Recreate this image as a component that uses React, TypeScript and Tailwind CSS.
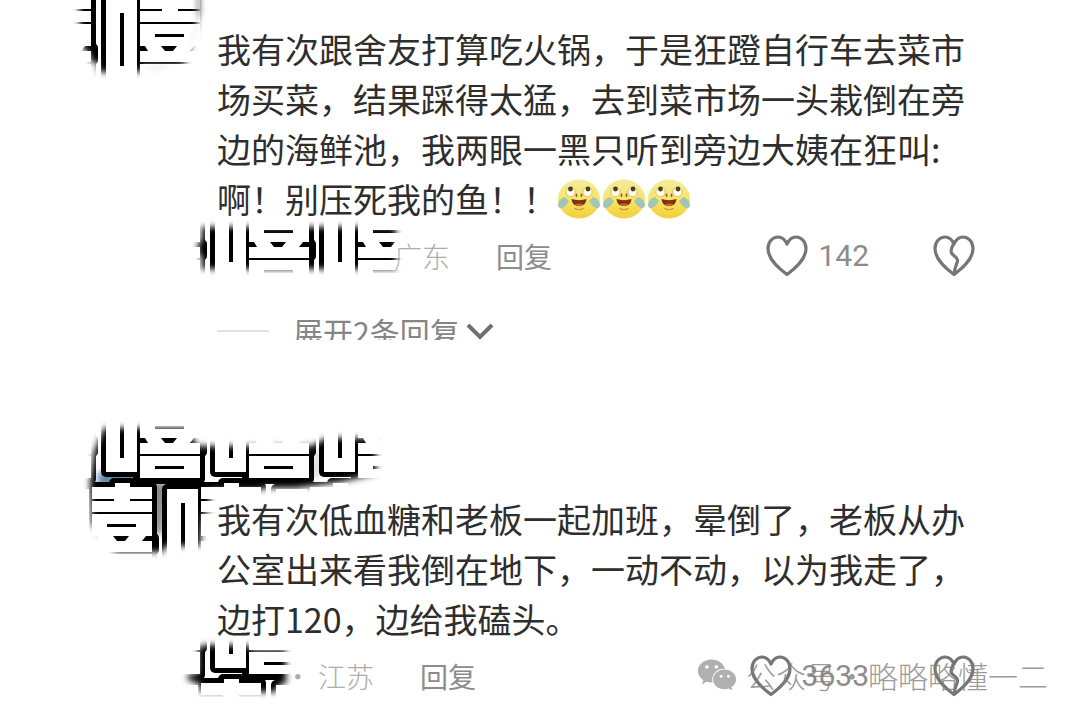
import React from "react";
import { FaWeixin } from "react-icons/fa";

type PatchProps = {
  id: string;
  viewBox: string;
  className: string;
  shape: string;
  tiles: [number, number][];
  children?: React.ReactNode;
};

/* One block of the mosaic sticker: white plates with a heavy rim and thin inner bars */
function Tile({ x, y }: { x: number; y: number }) {
  return (
    <g transform={`translate(${x} ${y})`}>
      <g fill="#000">
        <rect x="-5" y="-3" width="42" height="91" rx="5" />
        <rect x="27" y="-5" width="72" height="100" rx="5" />
        <rect x="51" y="-9" width="27" height="20" rx="5" />
        <rect x="90" y="46" width="11" height="22" rx="5" />
      </g>
      <g fill="#fff">
        <rect x="0" y="2" width="31" height="81" />
        <rect x="34" y="0" width="60" height="89" />
        <rect x="57" y="-4" width="15" height="8" />
      </g>
      <g fill="#000">
        <rect x="14" y="16" width="4" height="53" />
        <rect x="32" y="12" width="24" height="2" />
        <rect x="72" y="12" width="24" height="2" />
        <rect x="32" y="25" width="64" height="2" />
        <rect x="49" y="37" width="29" height="3" />
        <path d="M32 49H39L42 54H32ZM55 49H71L67 54H59ZM96 49H88L84 54H96Z" />
        <rect x="32" y="65" width="64" height="2" />
        <rect x="49" y="77" width="29" height="3" />
      </g>
    </g>
  );
}

/* A soft-edged brush stroke of mosaic blocks */
function Patch({ id, viewBox, className, shape, tiles, children }: PatchProps) {
  return (
    <svg viewBox={viewBox} className={className} aria-hidden="true">
      <defs>
        <filter id={`${id}-soft`} x="-20%" y="-30%" width="140%" height="160%">
          <feGaussianBlur stdDeviation="3" />
        </filter>
        <mask id={`${id}-mask`} maskUnits="userSpaceOnUse" x="0" y="-50" width="1080" height="800">
          <path d={shape} fill="white" filter={`url(#${id}-soft)`} />
        </mask>
      </defs>
      {children}
      <g mask={`url(#${id}-mask)`}>
        {tiles.map(([x, y]) => (
          <Tile key={`${x}-${y}`} x={x} y={y} />
        ))}
      </g>
    </svg>
  );
}

const HEART =
  "M21 39.500C15 35 2 25.500 2 13.500C2 7 6.500 2 12 2C16 2 19 4.500 21 9C23 4.500 26 2 30 2C35.500 2 40 7 40 13.500C40 25.500 27 35 21 39.500Z";

function Heart({ broken = false }: { broken?: boolean }) {
  return (
    <svg viewBox="0 0 42 42" className="h-[42px] w-[42px]" fill="none" stroke="#767676" strokeWidth="3.2" strokeLinejoin="round" strokeLinecap="round" aria-hidden="true">
      <path d={HEART} />
      {broken && <path d="M21 8C19 12 17 15 18.500 18C20 21 25 22 24.500 26C24 30 21 33 21.500 38" />}
    </svg>
  );
}

function Laugh() {
  return (
    <svg viewBox="0 0 44 40" className="h-10 w-11" role="img" aria-label="笑哭">
      <defs>
        <linearGradient id="face" x1="0" y1="0" x2="0" y2="1">
          <stop offset="0" stopColor="#f3ecA0" />
          <stop offset="0.5" stopColor="#f8e468" />
          <stop offset="1" stopColor="#f2cf3a" />
        </linearGradient>
      </defs>
      <ellipse cx="22" cy="20" rx="21" ry="19.500" fill="url(#face)" />
      <path d="M8 18C4 19 1 22 1 27C3 31 7 30 12 22Z" fill="#a3c6b4" />
      <path d="M36 18C40 19 43 22 43 27C41 31 37 30 32 22Z" fill="#a3c6b4" />
      <ellipse cx="13.500" cy="13" rx="4.600" ry="4.800" fill="#fffbe4" stroke="#cdb560" strokeWidth="0.800" />
      <ellipse cx="30.500" cy="13" rx="4.600" ry="4.800" fill="#fffbe4" stroke="#cdb560" strokeWidth="0.800" />
      <circle cx="13.500" cy="10" r="2.400" fill="#4b3f1b" />
      <circle cx="31" cy="10" r="2.400" fill="#4b3f1b" />
      <path d="M19.500 15.500V17M24.500 15.500V17" stroke="#93602a" strokeWidth="1.800" strokeLinecap="round" />
      <path d="M14.500 20C19 21.500 25 21.500 29.500 20C29 25 26 27 22 27C18 27 15 25 14.500 20Z" fill="#7c3414" />
      <path d="M18 25.500C20 24 24 24 26 25.500C24 27.300 20 27.300 18 25.500Z" fill="#d9603a" />
      <path d="M18 29.500C20 31 24 31 26 29.500" fill="none" stroke="#c99a2c" strokeWidth="1.400" strokeLinecap="round" />
    </svg>
  );
}

function Actions({ place, count, placeClass }: { place: string; count: string; placeClass: string }) {
  return (
    <div className="mt-[11px] flex h-[42px] items-center text-[28px] leading-[42px] text-[#8c8c8c]">
      <span className={`mr-[46px] text-right font-light text-[#adadad] ${placeClass}`}>{place}</span>
      <button type="button">回复</button>
      <button type="button" className="ml-auto flex items-center gap-[10px]" aria-label={`赞 ${count}`}>
        <Heart />
        <span className="text-[30px]" style={{ fontFamily: "Roboto, sans-serif" }}>
          {count}
        </span>
      </button>
      <button type="button" className="ml-16" aria-label="踩">
        <Heart broken />
      </button>
    </div>
  );
}

export default function App() {
  return (
    <main
      className="relative min-h-screen overflow-hidden bg-white text-[#2e2e2e]"
      style={{ fontFamily: '"Noto Sans CJK SC", sans-serif' }}
    >
      <article className="relative h-[340px] overflow-hidden pt-6 pr-[105px] pl-[217px]">
        <p className="text-[34px] leading-[50px]">
          我有次跟舍友打算吃火锅，于是狂蹬自行车去菜市场买菜，结果踩得太猛，去到菜市场一头栽倒在旁边的海鲜池，我两眼一黑只听到旁边大姨在狂叫:
          <br />
          啊！别压死我的鱼！！
          <span className="inline-flex h-[50px] items-center gap-px align-top">
            <Laugh />
            <Laugh />
            <Laugh />
          </span>
        </p>
        <Actions place="广东" count="142" placeClass="w-[233px]" />
        <button type="button" className="mt-8 flex items-center text-[30px] leading-[44px] text-[#858585]">
          <span className="mr-6 h-0.5 w-[52px] bg-[#e2e2e2]" />
          展开2条回复
          <svg viewBox="0 0 28 18" className="ml-1.5 h-[18px] w-7" fill="none" stroke="#707070" strokeWidth="4" aria-hidden="true">
            <path d="M2 3L14 15L26 3" />
          </svg>
        </button>
        <Patch
          id="a"
          viewBox="70 0 150 90"
          className="absolute top-0 left-[70px] h-[90px] w-[150px]"
          shape="M78 -20H197V24L186 62L180 66H142V72H98V62H90V54L84 50L80 30Z"
          tiles={[[-3, -3], [106, -3]]}
        >
          <g filter="url(#a-soft)">
            <path d="M190 -5H200V14L192 22Z" fill="#8a8a8a" />
            <path d="M194 20C192 45 176 62 150 68" fill="none" stroke="#dcdcdc" strokeWidth="4" />
          </g>
        </Patch>
        <Patch
          id="b"
          viewBox="180 215 230 70"
          className="absolute top-[215px] left-[180px] h-[70px] w-[230px]"
          shape="M202 227H396V269H202V257L198 254V243L202 240Z"
          tiles={[[106, 193], [215, 193], [324, 193]]}
        />
      </article>

      <article className="relative mt-[154px] pr-[105px] pl-[217px]">
        <p className="text-[34px] leading-[50px]">
          我有次低血糖和老板一起加班，晕倒了，老板从办公室出来看我倒在地下，一动不动，以为我走了，边打120，边给我磕头。
        </p>
        <Actions place="· 江苏" count="3633" placeClass="w-[157px]" />
        <Patch
          id="c"
          viewBox="70 415 340 150"
          className="absolute -top-[79px] left-[70px] h-[150px] w-[340px]"
          shape="M104 428H190L196 446H312L326 438H376V474L340 482L296 488H262V490H210V512H204L200 546H164V552H116L92 524L90 484L94 452Z"
          tiles={[[-3, 389], [106, 389], [215, 389], [324, 389], [58, 487], [167, 487], [276, 487]]}
        >
          <g filter="url(#c-soft)">
            <path d="M98 472H140V486H98Z" fill="#5d87a8" />
            <path d="M152 482H166V500L162 534H154Z" fill="#8c8780" />
            <path d="M314 450H320V478H312Z" fill="#d6d6d6" />
          </g>
        </Patch>
        <Patch
          id="d"
          viewBox="170 635 130 75"
          className="absolute top-[141px] left-[170px] h-[75px] w-[130px]"
          shape="M198 648L204 645H248L252 650H286V684H280L276 692H200V684L188 680V674H198Z"
          tiles={[[106, 585], [215, 585], [167, 683], [276, 683]]}
        />
      </article>

      <div className="absolute top-[653px] right-[32px] flex items-center gap-[9px] text-[30px] leading-[44px] font-light text-[#808080]/80">
        <FaWeixin className="h-10 w-10 text-[#b0b0b0]" aria-hidden="true" />
        <span>
          公众号<span className="inline-block w-8 text-center">·</span>略略略懂一二
        </span>
      </div>
    </main>
  );
}
